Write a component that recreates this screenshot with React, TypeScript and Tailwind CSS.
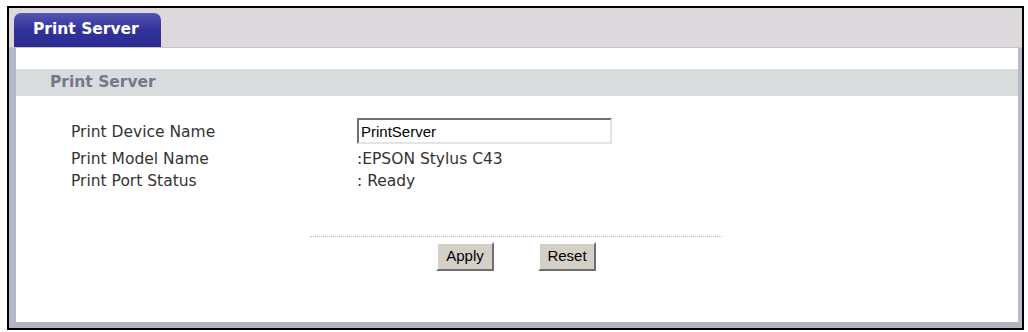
import React from 'react';

const verdana = { fontFamily: '"DejaVu Sans", Verdana, sans-serif' };
const arial = { fontFamily: '"Liberation Sans", Arial, sans-serif' };

const Row: React.FC<{ label: string; children: React.ReactNode; className?: string; labelClass?: string }> = ({ label, children, className, labelClass }) => (
  <div className={`flex items-center ${className ?? ''}`}>
    <div className={`w-[341px] pl-[55px] text-[15.5px] text-[#333] ${labelClass ?? ''}`}>{label}</div>
    <div className="text-[15.5px] text-[#333]">{children}</div>
  </div>
);

export default function App() {
  return (
    <div className="w-[1028px] h-[332px] bg-white pt-[6px] pl-[7px]" style={verdana}>
      <div className="w-[1017px] h-[324px] border-2 border-black bg-[#dcd8dc] flex flex-col">
        {/* tab strip */}
        <div className="h-[40px] flex items-end pl-[5px] border-b border-[#c8c4cc]">
          <div className="h-[34px] w-[147px] rounded-t-[7px] bg-gradient-to-b from-[#5454b2] via-[#32329c] to-[#2a2a90] flex items-center pl-[19px] text-white font-bold text-[15.5px]">
            Print Server
          </div>
        </div>

        {/* content panel */}
        <div className="flex-1 bg-white border-l-[7px] border-r-[4px] border-b-[6px] border-l-[#b4b8c6] border-r-[#b8bcc8] border-b-[#b0b4c2] flex flex-col">
          <div className="mt-[21px] h-[27px] bg-[#d8dcdc] flex items-center pl-[34px] text-[15.5px] font-bold text-[#77778a]">
            Print Server
          </div>

          <Row label="Print Device Name" className="mt-[21px] h-[28px]" labelClass="pt-[4px]">
            <input
              readOnly
              value="PrintServer"
              className="w-[255px] h-[26px] px-[2px] text-[15px] text-black bg-white border-2 border-t-[#707070] border-l-[#707070] border-r-[#e4e4e4] border-b-[#e4e4e4] outline-none"
              style={arial}
            />
          </Row>
          <Row label="Print Model Name" className="mt-[4px] h-[22px]">
            :EPSON Stylus C43
          </Row>
          <Row label="Print Port Status" className="h-[22px]">
            : Ready
          </Row>

          <div className="mt-[43px] ml-[294px] w-[412px] border-t border-dotted border-[#b8b8b8]" />

          <div className="mt-[5px] flex">
            <button
              className="ml-[420px] w-[58px] h-[29px] bg-[#d4d0c8] border-2 border-t-white border-l-white border-r-[#6f6f6f] border-b-[#6f6f6f] text-[15px] text-black"
              style={arial}
            >
              Apply
            </button>
            <button
              className="ml-[44px] w-[58px] h-[29px] bg-[#d4d0c8] border-2 border-t-white border-l-white border-r-[#6f6f6f] border-b-[#6f6f6f] text-[15px] text-black"
              style={arial}
            >
              Reset
            </button>
          </div>
        </div>
      </div>
    </div>
  );
}
